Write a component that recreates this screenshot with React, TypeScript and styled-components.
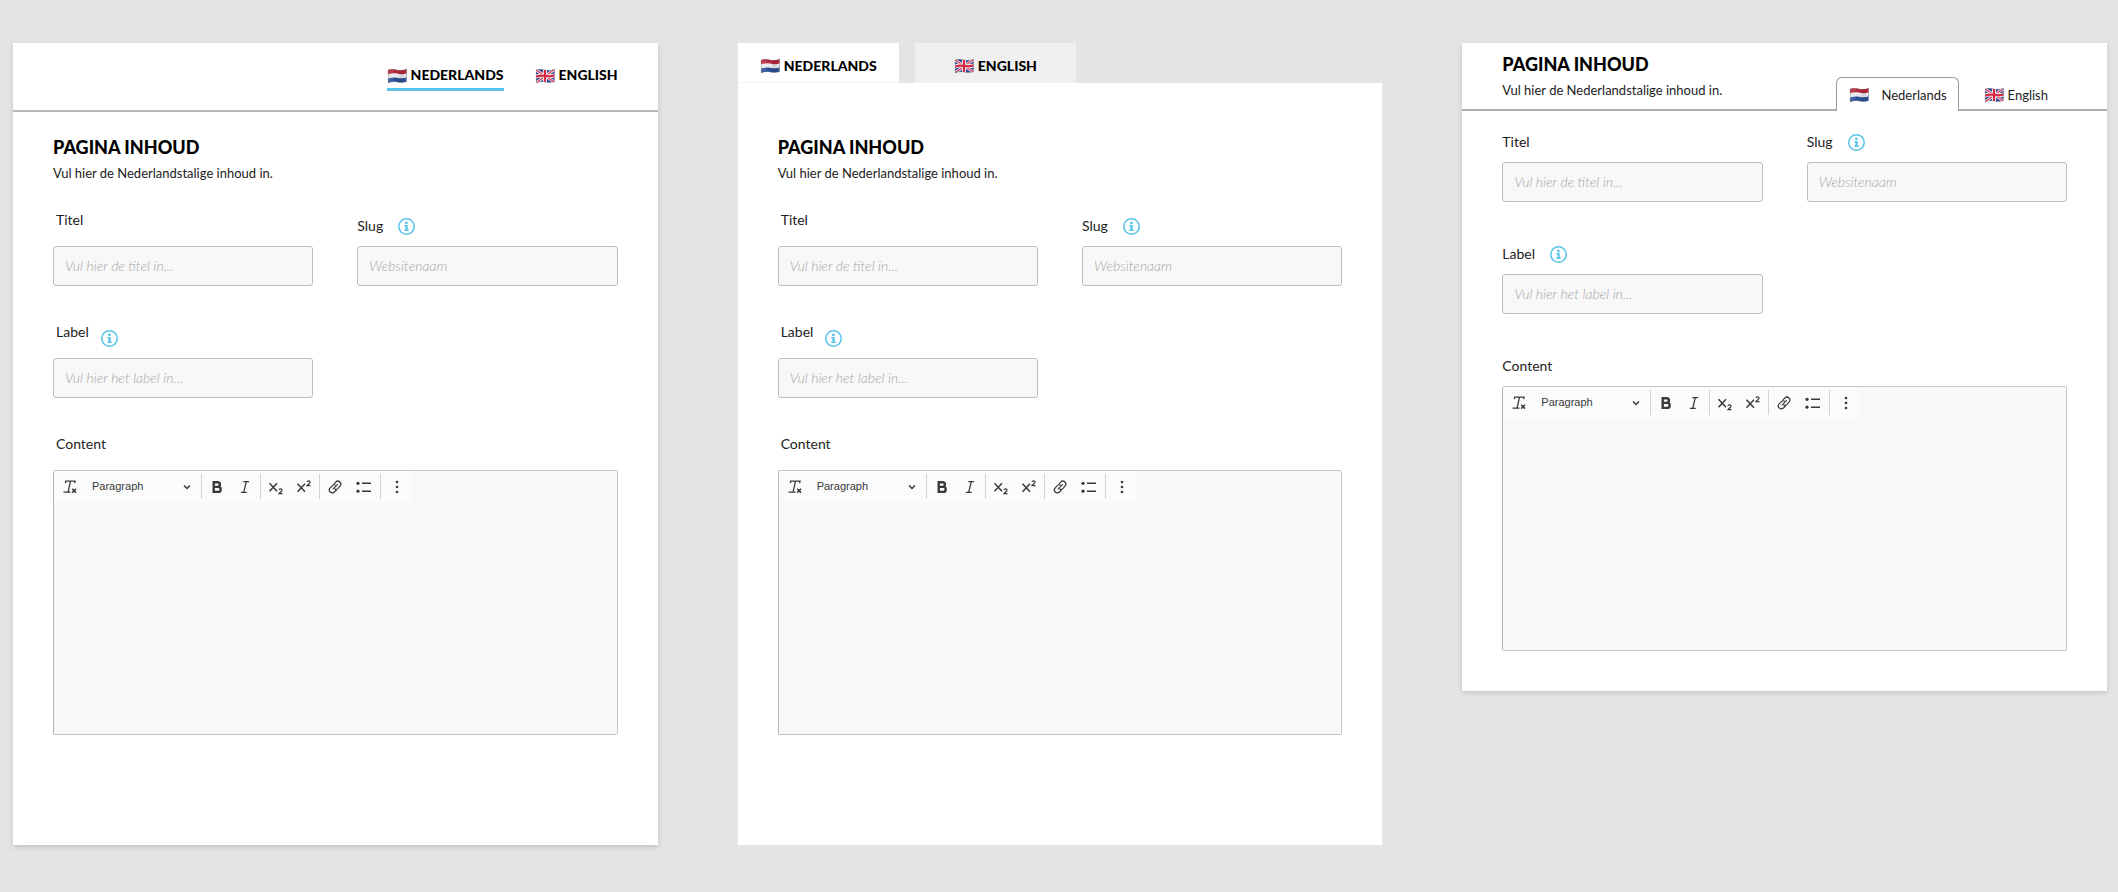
import React, { useId, useState } from 'react';
import styled, { createGlobalStyle, css } from 'styled-components';

const GlobalStyle = createGlobalStyle`
  *, *::before, *::after { box-sizing: border-box; }
  body {
    margin: 0;
    background: #e4e4e4;
    color: #222;
    font-family: Lato, "Open Sans", sans-serif;
    font-size: 14px;
    line-height: 20px;
  }
  button, input, select, textarea { font: inherit; color: inherit; margin: 0; }
  button { background: none; border: 0; padding: 0; cursor: pointer; }
  svg { display: block; flex: none; }
`;

type Variant = 'underline' | 'folder' | 'inline';
type Lang = 'nl' | 'en';

const Board = styled.main`
  display: grid;
  grid-template-columns: repeat(3, minmax(0, 1fr));
  align-items: start;
  gap: 80px;
  padding: 43px 11px 47px 13px;
`;

const Panel = styled.section<{ $raised?: boolean }>`
  background: ${p => (p.$raised ? '#fff' : 'none')};
  box-shadow: ${p => (p.$raised ? '0 2px 5px rgba(0, 0, 0, 0.14)' : 'none')};
`;

const Body = styled.div<{ $top: number; $bottom: number }>`
  background: #fff;
  padding: ${p => p.$top}px 40px ${p => p.$bottom}px;
`;

/* Headings */

const Title = styled.h2`
  margin: 0;
  color: #000;
  font-size: 18px;
  font-weight: 900;
  line-height: 24px;
`;

const Subtitle = styled.p`
  margin: 4px 0 0;
  font-size: 13px;
  line-height: 20px;
`;

/* Language switchers */

const UnderlineHeader = styled.nav`
  display: flex;
  justify-content: flex-end;
  gap: 31px;
  padding: 22px 40px 19px;
  border-bottom: 2px solid #b8b8b8;
`;

const boldTab = css`
  display: flex;
  align-items: center;
  gap: 4px;
  color: #000;
  font-size: 14px;
  font-weight: 900;
`;

const UnderlineTab = styled.button<{ $active: boolean }>`
  ${boldTab}
  padding: 0 0 3px;
  border-bottom: 3px solid ${p => (p.$active ? '#5bc4ea' : 'transparent')};
`;

const FolderTabs = styled.nav`
  display: flex;
  gap: 16px;
`;

const FolderTab = styled.button<{ $active: boolean }>`
  ${boldTab}
  flex: 0 0 25%;
  justify-content: center;
  height: 40px;
  padding: 6px 0 0;
  background: ${p => (p.$active ? '#fff' : '#f0f0f0')};
  border-bottom: 1px solid #f4f4f4;
`;

const InlineHeader = styled.header`
  display: flex;
  justify-content: space-between;
  padding: 9px 58px 0 40px;
  border-bottom: 2px solid #b0b0b0;
`;

const InlineHeading = styled.div`
  padding-bottom: 9px;
`;

const InlineTabs = styled.nav`
  display: flex;
  align-items: flex-end;
  gap: 12px;
  margin-bottom: -2px;
`;

const InlineTab = styled.button<{ $active: boolean }>`
  display: flex;
  align-items: center;
  gap: ${p => (p.$active ? 12 : 4)}px;
  height: 34px;
  padding: 0 ${p => (p.$active ? 11 : 0)}px 0 12px;
  border: 1px solid ${p => (p.$active ? '#999' : 'transparent')};
  border-bottom: 0;
  border-radius: 6px 6px 0 0;
  background: ${p => (p.$active ? '#fff' : 'none')};
  font-size: 13px;
`;

/* Form */

const Form = styled.form<{ $variant: Variant }>`
  display: grid;
  grid-template-columns: repeat(2, minmax(0, 1fr));
  column-gap: 44px;
  row-gap: ${p => (p.$variant === 'inline' ? 42 : 36)}px;
  margin-top: ${p => (p.$variant === 'inline' ? 0 : 27)}px;
`;

const Field = styled.div<{ $wide?: boolean; $newRow?: boolean }>`
  display: flex;
  flex-direction: column;
  ${p => p.$newRow && 'grid-column-start: 1;'}
  ${p => p.$wide && 'grid-column: 1 / -1;'}
`;

const LabelRow = styled.div<{ $height: number; $top: number; $indent: number; $gap: number }>`
  display: flex;
  align-items: flex-start;
  gap: ${p => p.$gap}px;
  height: ${p => p.$height}px;
  padding: ${p => p.$top}px 0 0 ${p => p.$indent}px;
`;

const InfoButton = styled.button<{ $drop: boolean }>`
  padding-top: ${p => (p.$drop ? 8 : 2)}px;
  color: #5bc4ea;
`;

const TextInput = styled.input`
  width: 100%;
  height: 40px;
  padding: 0 11px 1px;
  border: 1px solid #bdbdbd;
  border-radius: 3px;
  background: #f8f8f8;
  &::placeholder {
    color: #a6a6a6;
    font-style: italic;
    font-weight: 300;
    opacity: 1;
  }
`;

/* Rich text editor */

const Editor = styled.div`
  display: flex;
  flex-direction: column;
  height: 265px;
  border: 1px solid #c6c6c6;
  border-left-color: #b5b5b5;
  border-radius: 2px;
  background: #f8f8f8;
`;

const Toolbar = styled.div`
  display: flex;
  align-items: center;
  align-self: flex-start;
  height: 31px;
  background: #fbfbfb;
  color: #3a3a3a;
`;

const ToolButton = styled.button<{ $width?: number }>`
  display: flex;
  align-items: center;
  justify-content: center;
  width: ${p => p.$width ?? 28}px;
  height: 28px;
`;

const Separator = styled.span`
  width: 1px;
  height: 25px;
  margin: 0 1px;
  background: #d2d2d2;
`;

const SelectWrap = styled.div`
  display: flex;
  align-items: center;
  width: 114px;
`;

const StyleSelect = styled.select`
  appearance: none;
  width: 100%;
  height: 28px;
  padding: 0 24px 2px 6px;
  border: 0;
  background: none;
  font-family: "Liberation Sans", Arial, sans-serif;
  font-size: 11px;
`;

const SelectArrow = styled.span`
  margin-left: -17px;
  pointer-events: none;
`;

const EditorArea = styled.textarea`
  flex: 1;
  width: 100%;
  padding: 8px 11px;
  border: 0;
  background: none;
  resize: none;
`;

/* Drawings */

const WAVE = 'M1 3C4 2 7 2.300 10 2.900S16.500 3.400 19.500 2.300V14.800C16.500 15.900 13 15.600 10 15S4 14.700 1.200 16Z';

function DutchFlag() {
  const id = useId();
  return (
    <svg width="20" height="17" viewBox="0 0 20 17" aria-hidden="true">
      <clipPath id={id}><path d={WAVE} /></clipPath>
      <g clipPath={`url(#${id})`}>
        <rect width="20" height="17" fill="#2a4f93" />
        <path d="M0 0H20V10.300C16.500 11.700 13 11.300 10 10.700S4 10.500 0 11.800Z" fill="#e9e9ee" />
        <path d="M0 0H20V6.200C16.500 7.600 13 7.200 10 6.600S4 6.300 0 7.600Z" fill="#b5283a" />
        <path d="M0 0H6.500V17H0Z" fill="#fff" opacity="0.1" />
        <path d="M12 0H17V17H12Z" fill="#000" opacity="0.08" />
      </g>
      <path d={WAVE} fill="none" stroke="#555" strokeOpacity="0.3" strokeWidth="0.6" />
    </svg>
  );
}

function BritishFlag() {
  const id = useId();
  return (
    <svg width="20" height="17" viewBox="0 0 20 17" aria-hidden="true">
      <clipPath id={id}><path d={WAVE} /></clipPath>
      <g clipPath={`url(#${id})`} fill="none">
        <rect width="20" height="17" fill="#2f4a94" />
        <path d="M1 3 19.500 15M1 16 19.500 2.300" stroke="#efe9ef" strokeWidth="2.800" />
        <path d="M1 3 19.500 15M1 16 19.500 2.300" stroke="#d8344c" strokeWidth="1.100" />
        <path d="M10 1V16M0 10C4 8.200 7 8.400 10 8.900S16.500 9.700 20 8.400" stroke="#f3eef2" strokeWidth="4" />
        <path d="M10 1V16M0 10C4 8.200 7 8.400 10 8.900S16.500 9.700 20 8.400" stroke="#d42a43" strokeWidth="2.200" />
      </g>
      <path d={WAVE} fill="none" stroke="#555" strokeOpacity="0.3" strokeWidth="0.6" />
    </svg>
  );
}

function InfoIcon() {
  return (
    <svg width="17" height="17" viewBox="0 0 17 17" fill="none" aria-hidden="true">
      <circle cx="8.500" cy="8.500" r="7.700" stroke="currentColor" strokeWidth="1.600" />
      <circle cx="8.400" cy="4.900" r="1.400" fill="currentColor" />
      <path d="M6.400 7.100H9.700V11.500H10.700V13H6.400V11.500H7.400V8.600H6.400Z" fill="currentColor" />
    </svg>
  );
}

function ToolIcon({ size = 16, children }: { size?: number; children: React.ReactNode }) {
  return (
    <svg
      width={size}
      height="16"
      viewBox={`0 0 ${size} 16`}
      fill="none"
      stroke="currentColor"
      strokeWidth="1.300"
      aria-hidden="true"
    >
      {children}
    </svg>
  );
}

const ClearIcon = () => (
  <ToolIcon>
    <path d="M3.300 4.200 3.700 2.200H13L12.600 4.200M8.500 2.200 6.200 12.600M1.500 13.200H8.500" />
    <path d="M10.200 9.800 14 13.600M14 9.800 10.200 13.600" strokeWidth="1.500" />
  </ToolIcon>
);

const BoldIcon = () => (
  <ToolIcon>
    <path d="M4.700 3.200H8.600A2.300 2.300 0 0 1 8.600 7.900H4.700ZM4.700 7.900H9.200A2.500 2.500 0 0 1 9.200 12.900H4.700Z" strokeWidth="2.400" />
  </ToolIcon>
);

const ItalicIcon = () => (
  <ToolIcon>
    <path d="M6.300 2.600H12M4 13.400H9.700M9.300 2.600 6.700 13.400" />
  </ToolIcon>
);

const SubIcon = () => (
  <ToolIcon>
    <path d="M1.500 4.200 9 12.200M9 4.200 1.500 12.200" strokeWidth="1.500" />
    <path d="M11 10.900C11.300 9.400 14.200 9.500 14 11.200C13.900 12.300 12 13.200 11 14.700H14.500" strokeWidth="1.200" />
  </ToolIcon>
);

const SuperIcon = () => (
  <ToolIcon>
    <path d="M1.500 4.800 9 12.800M9 4.800 1.500 12.800" strokeWidth="1.500" />
    <path d="M11 2.900C11.300 1.400 14.200 1.500 14 3.200C13.900 4.300 12 5.200 11 6.700H14.500" strokeWidth="1.200" />
  </ToolIcon>
);

const LinkIcon = () => (
  <ToolIcon>
    <path d="M6.200 9.900 10.400 5.600M7.100 4.800 8.700 3.100A2.900 2.900 0 0 1 13 7.200L10.800 9.600A2.600 2.600 0 0 1 7.900 10.100M9.300 11.200 7.400 13A2.900 2.900 0 0 1 3.200 8.900L5.400 6.600A2.600 2.600 0 0 1 8.300 6" strokeLinecap="round" strokeWidth="1.200" />
  </ToolIcon>
);

const ListIcon = () => (
  <ToolIcon>
    <path d="M6 4.300H15M6 12.200H15" strokeWidth="1.400" />
    <circle cx="2" cy="4.300" r="1.600" fill="currentColor" stroke="none" />
    <circle cx="2" cy="12.200" r="1.600" fill="currentColor" stroke="none" />
  </ToolIcon>
);

const MoreIcon = () => (
  <ToolIcon>
    <g fill="currentColor" stroke="none">
      <circle cx="8" cy="3" r="1.300" />
      <circle cx="8" cy="8" r="1.300" />
      <circle cx="8" cy="13" r="1.300" />
    </g>
  </ToolIcon>
);

const ChevronIcon = () => (
  <ToolIcon size={8}>
    <path d="M1 6.500 4 9.500 7 6.500" strokeWidth="1.500" />
  </ToolIcon>
);

/* Composition */

const LANGS: { id: Lang; name: string; Flag: () => React.ReactElement }[] = [
  { id: 'nl', name: 'Nederlands', Flag: DutchFlag },
  { id: 'en', name: 'English', Flag: BritishFlag },
];

function RichTextEditor({ id }: { id: string }) {
  return (
    <Editor>
      <Toolbar role="toolbar" aria-label="Opmaak">
        <ToolButton type="button" aria-label="Opmaak wissen" $width={32}><ClearIcon /></ToolButton>
        <SelectWrap>
          <StyleSelect aria-label="Stijl"><option>Paragraph</option></StyleSelect>
          <SelectArrow><ChevronIcon /></SelectArrow>
        </SelectWrap>
        <Separator />
        <ToolButton type="button" aria-label="Vet"><BoldIcon /></ToolButton>
        <ToolButton type="button" aria-label="Cursief"><ItalicIcon /></ToolButton>
        <Separator />
        <ToolButton type="button" aria-label="Subscript"><SubIcon /></ToolButton>
        <ToolButton type="button" aria-label="Superscript"><SuperIcon /></ToolButton>
        <Separator />
        <ToolButton type="button" aria-label="Link"><LinkIcon /></ToolButton>
        <ToolButton type="button" aria-label="Lijst" $width={30}><ListIcon /></ToolButton>
        <Separator />
        <ToolButton type="button" aria-label="Meer" $width={30}><MoreIcon /></ToolButton>
      </Toolbar>
      <EditorArea id={id} />
    </Editor>
  );
}

function ContentForm({ variant }: { variant: Variant }) {
  const id = useId();
  const even = variant === 'inline';
  const row = { $height: even ? 30 : 36, $top: 0, $indent: even ? 0 : 3, $gap: 15 };
  return (
    <Form $variant={variant} onSubmit={e => e.preventDefault()}>
      <Field>
        <LabelRow {...row}><label htmlFor={`${id}-title`}>Titel</label></LabelRow>
        <TextInput id={`${id}-title`} placeholder="Vul hier de titel in..." />
      </Field>
      <Field>
        <LabelRow {...row} $top={even ? 0 : 6} $indent={0}>
          <label htmlFor={`${id}-slug`}>Slug</label>
          <InfoButton type="button" aria-label="Uitleg bij slug" $drop={false}><InfoIcon /></InfoButton>
        </LabelRow>
        <TextInput id={`${id}-slug`} placeholder="Websitenaam" />
      </Field>
      <Field $newRow>
        <LabelRow {...row} $gap={even ? 15 : 12}>
          <label htmlFor={`${id}-label`}>Label</label>
          <InfoButton type="button" aria-label="Uitleg bij label" $drop={!even}><InfoIcon /></InfoButton>
        </LabelRow>
        <TextInput id={`${id}-label`} placeholder="Vul hier het label in..." />
      </Field>
      <Field $wide>
        <LabelRow {...row}><label htmlFor={`${id}-content`}>Content</label></LabelRow>
        <RichTextEditor id={`${id}-content`} />
      </Field>
    </Form>
  );
}

function Heading() {
  return (
    <>
      <Title>PAGINA INHOUD</Title>
      <Subtitle>Vul hier de Nederlandstalige inhoud in.</Subtitle>
    </>
  );
}

function UnderlinePanel() {
  const [lang, setLang] = useState<Lang>('nl');
  return (
    <Panel $raised>
      <UnderlineHeader aria-label="Taal">
        {LANGS.map(({ id, name, Flag }) => (
          <UnderlineTab key={id} type="button" $active={lang === id} onClick={() => setLang(id)}>
            <Flag />{name.toUpperCase()}
          </UnderlineTab>
        ))}
      </UnderlineHeader>
      <Body $top={23} $bottom={110}>
        <Heading />
        <ContentForm variant="underline" />
      </Body>
    </Panel>
  );
}

function FolderPanel() {
  const [lang, setLang] = useState<Lang>('nl');
  return (
    <Panel>
      <FolderTabs aria-label="Taal">
        {LANGS.map(({ id, name, Flag }) => (
          <FolderTab key={id} type="button" $active={lang === id} onClick={() => setLang(id)}>
            <Flag />{name.toUpperCase()}
          </FolderTab>
        ))}
      </FolderTabs>
      <Body $top={52} $bottom={110}>
        <Heading />
        <ContentForm variant="folder" />
      </Body>
    </Panel>
  );
}

function InlinePanel() {
  const [lang, setLang] = useState<Lang>('nl');
  return (
    <Panel $raised>
      <InlineHeader>
        <InlineHeading><Heading /></InlineHeading>
        <InlineTabs aria-label="Taal">
          {LANGS.map(({ id, name, Flag }) => (
            <InlineTab key={id} type="button" $active={lang === id} onClick={() => setLang(id)}>
              <Flag />{name}
            </InlineTab>
          ))}
        </InlineTabs>
      </InlineHeader>
      <Body $top={21} $bottom={40}>
        <ContentForm variant="inline" />
      </Body>
    </Panel>
  );
}

export default function App() {
  return (
    <>
      <GlobalStyle />
      <Board>
        <UnderlinePanel />
        <FolderPanel />
        <InlinePanel />
      </Board>
    </>
  );
}
